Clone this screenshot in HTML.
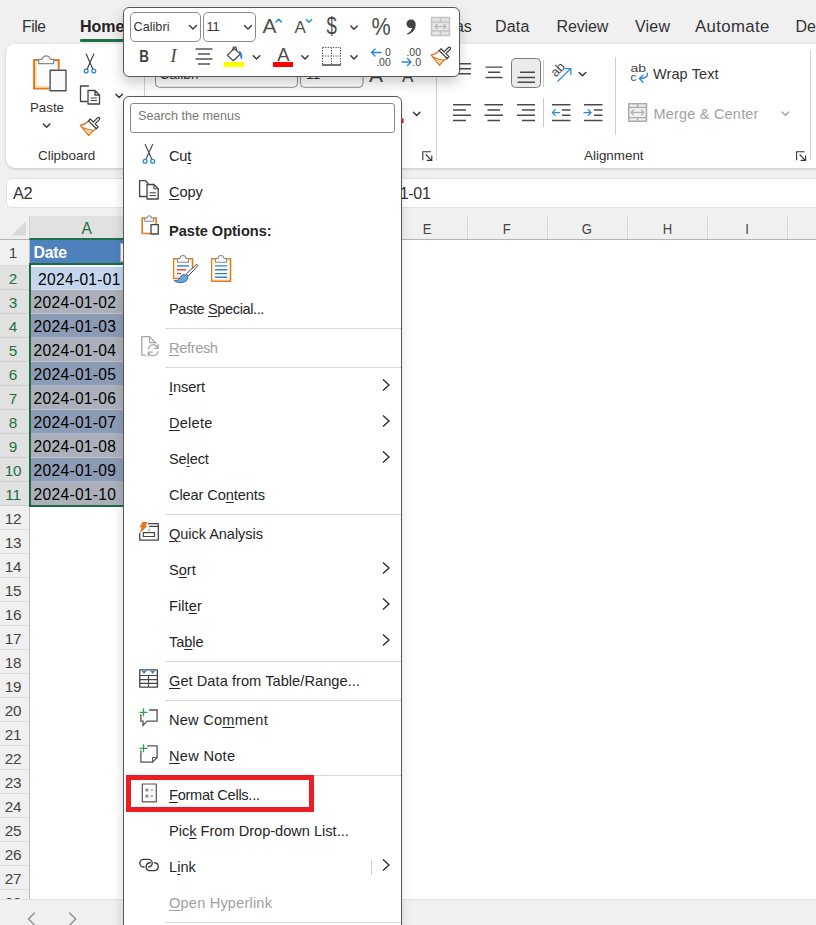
<!DOCTYPE html>
<html lang="en">
<head>
<meta charset="utf-8">
<title>Excel - Format Cells context menu</title>
<style>
*{box-sizing:border-box;margin:0;padding:0}
html,body{width:816px;height:925px;overflow:hidden;background:#f0f0f0;font-family:"Liberation Sans",sans-serif;color:#242424}
.abs{position:absolute}
#app{position:relative;width:816px;height:925px;overflow:hidden;background:#f0f0f0}
/* tabs */
.tab{position:absolute;top:16.700px;font-size:16.5px;line-height:20px;color:#333;white-space:nowrap}
/* ribbon */
#ribbon{position:absolute;left:6px;top:44px;width:830px;height:124px;background:#fff;border-radius:9px;box-shadow:0 1px 3px rgba(0,0,0,.18)}
.rl{position:absolute;font-size:13px;color:#333;white-space:nowrap}
/* formula bar */
#namebox{position:absolute;left:6px;top:178px;width:170px;height:30px;background:#fff;border:1px solid #e2e2e2;border-radius:6px}
#fbar{position:absolute;left:184px;top:178px;width:650px;height:30px;background:#fff;border:1px solid #e2e2e2;border-radius:6px}
/* grid */
#sheet{position:absolute;left:0;top:216px;width:816px;height:683px;background:#fff;overflow:hidden}
#colhdr{position:absolute;left:0;top:0;width:816px;height:24px;background:#f0f0f0;border-bottom:1px solid #b4b4b4}
.ch{position:absolute;top:1px;height:22px;font-size:15.200px;line-height:23px;text-align:center;color:#444;border-right:1px solid #d6d6d6}
.ch span{display:inline-block;transform:scaleX(.86)}
#rowhdr{position:absolute;left:0;top:24px;width:30px;height:660px;background:#f0f0f0;border-right:1px solid #bdbdbd}
.rh{position:absolute;left:0;width:29px;height:24px;font-size:15.300px;line-height:24px;text-align:center;color:#444;border-bottom:1px solid #dcdcdc;padding-right:3px;letter-spacing:-.2px}
.rh.s{color:#1e6e42;background:#e1e1e1;border-bottom-color:#cfcfcf}
.cell{position:absolute;left:31px;width:100px;height:24px;font-size:15.600px;letter-spacing:.3px;line-height:25px;color:#000;white-space:nowrap;padding-left:2px}
/* bottom */
#bottom{position:absolute;left:0;top:899px;width:816px;height:26px;background:#f0f0f0;border-top:1px solid #e0e0e0}
/* mini toolbar */
#mini{position:absolute;left:123px;top:7px;width:337px;height:70px;background:#fff;border:1px solid #585858;border-radius:6px;box-shadow:-1px 6px 13px rgba(0,0,0,.2)}
.combo{border:1px solid #8c8c8c;border-radius:5px;background:#fff}
.mt{line-height:20px;color:#333;white-space:nowrap}
/* menu */
#menu{position:absolute;left:123px;top:96px;width:279px;height:840px;background:#fff;border:1px solid #585858;border-radius:6px 6px 0 0;box-shadow:-1px 5px 12px rgba(0,0,0,.14)}
.mi{position:absolute;left:169px;font-size:14.6px;line-height:20px;color:#262626;white-space:nowrap}
.mi.d{color:#a0a0a0}
.mi u{text-decoration:underline;text-underline-offset:2px;text-decoration-thickness:1px}
.sep{position:absolute;left:165px;width:236px;height:1px;background:#d6d6d6}
.arr{position:absolute;left:380.500px;width:10px;height:14px}
</style>
</head>
<body>
<div id="app">

<!-- TABS -->
<div class="tab" style="left:22px;font-size:15.600px;letter-spacing:-.4px">File</div>
<div class="tab" style="left:80px;font-weight:bold;color:#222;font-size:16px">Home</div>
<div class="abs" style="left:80px;top:39px;width:46px;height:2.500px;background:#1e7145;border-radius:1px"></div>
<div class="tab" style="left:442.500px;font-size:16px">ulas</div>
<div class="tab" style="left:495px;font-size:16px;letter-spacing:.2px">Data</div>
<div class="tab" style="left:556.500px;font-size:16px;letter-spacing:-.15px">Review</div>
<div class="tab" style="left:635px;font-size:16px;letter-spacing:.18px">View</div>
<div class="tab" style="left:695px;font-size:16.800px;letter-spacing:.35px">Automate</div>
<div class="tab" style="left:795.500px;font-size:16px">Developer</div>

<!-- RIBBON -->
<!--RIB-START-->
<div id="ribbon"></div>
<div class="rl" style="left:30px;top:97.500px;font-size:13.300px;line-height:20px">Paste</div>
<div class="rl" style="left:38px;top:146px;font-size:13.400px;line-height:20px">Clipboard</div>
<div class="rl" style="left:584px;top:146px;font-size:13.400px;line-height:20px">Alignment</div>
<div class="rl" style="left:653px;top:63.800px;font-size:14.500px;line-height:20px;letter-spacing:.1px">Wrap Text</div>
<div class="rl" style="left:653.500px;top:103.500px;font-size:14.500px;line-height:20px;color:#a2a2a2;letter-spacing:.2px">Merge &amp; Center</div>
<div class="rl" style="left:159.500px;top:64.500px;font-size:13.800px;line-height:20px;color:#333">Calibri</div>
<div class="rl" style="left:306px;top:64.500px;font-size:13.800px;line-height:20px;color:#333">11</div>
<svg class="abs" style="left:0;top:44px" width="816" height="124" viewBox="0 44 816 124" fill="none" stroke-linecap="round" stroke-linejoin="round">
  <!-- group separators -->
  <path d="M144.500 50.500V160.500M436.500 50.500V160.500M615.500 57.500V134.500M810.500 50.500V160.500" stroke="#cfcfcf" stroke-width="1" stroke-linecap="butt"/>
  <path d="M543.500 60V87M543.500 98V127" stroke="#c8c8c8" stroke-width="1" stroke-linecap="butt"/>
  <!-- paste icon -->
  <path d="M58.700 69.500V60.100H34.100V88.400H49.500" stroke="#e8761b" stroke-width="2" fill="#fcfcfc" stroke-linejoin="miter" stroke-linecap="butt"/>
  <path d="M35.900 61.500V86.700H49.500" stroke="#fbd9a0" stroke-width="1.400" stroke-linejoin="miter" stroke-linecap="butt"/>
  <path d="M38.700 63.700V59.300H42a4.300 4.300 0 0 1 8.400 0H53.700V63.700Z" fill="#fafafa" stroke="#8a8a8a" stroke-width="1.200"/>
  <rect x="50.100" y="70.200" width="15.900" height="20.500" fill="#fafafa" stroke="#505050" stroke-width="1.400"/>
  <path d="M43.300 124L46.600 127.300L49.900 124" stroke="#333" stroke-width="1.400"/>
  <!-- scissors -->
  <path d="M86.200 54L93 69.500M93.800 54L87 69.500" stroke="#444" stroke-width="1.200"/>
  <circle cx="86.200" cy="71" r="1.900" stroke="#2b88d8" stroke-width="1.300"/>
  <circle cx="93.800" cy="71" r="1.900" stroke="#2b88d8" stroke-width="1.300"/>
  <!-- copy -->
  <path d="M87 101.500H80.500V86H88.500" stroke="#444" stroke-width="1.300"/>
  <path d="M88 90.500H95L99.500 95V104H88Z M95 90.500V95H99.500" stroke="#444" stroke-width="1.300" fill="#fff"/>
  <path d="M91 98H96.500M91 100.500H96.500" stroke="#444" stroke-width="1"/>
  <path d="M115.800 94.200L119.100 97.500L122.400 94.200" stroke="#333" stroke-width="1.400"/>
  <!-- format painter -->
  <g transform="translate(80 116.500)">
    <path d="M8.300 4.700C6 7 3.500 8.300 .400 8.800L8.700 18.900C10.200 16.500 12.500 14.300 15.900 12.500" stroke="#e36c0a" stroke-width="1.300" fill="#fdfdfd"/>
    <path d="M2.600 11C6 12.700 9.500 13.700 13.600 14" stroke="#e36c0a" stroke-width="1.100"/>
    <path d="M5.900 13.700L11.800 14.500L8.700 17.800Z" fill="#fbd58f" stroke="none"/>
    <path d="M8.420 4.310L10.260 2.470L13.340 5.550L17.720 1.170A1.250 1.250 0 0 1 19.480 2.930L15.100 7.310L18.180 10.390L16.340 12.230Z" stroke="#3a3a3a" stroke-width="1.200" fill="#fff"/>
  </g>
  <!-- font combos (mostly hidden) -->
  <rect x="155.500" y="59.500" width="142" height="27.800" rx="4" stroke="#8c8c8c" fill="none"/>
  <rect x="300.500" y="59.500" width="62.500" height="27.800" rx="4" stroke="#8c8c8c" fill="none"/>
  <text x="369" y="82" font-family="Liberation Sans, sans-serif" font-size="21" fill="#444" stroke="none">A</text>
  <text x="402" y="82" font-family="Liberation Sans, sans-serif" font-size="17" fill="#444" stroke="none">A</text>
  <!-- bits right of menu -->
  <rect x="401" y="118.500" width="2.500" height="4.500" fill="#ff0000" stroke="none"/>
  <path d="M413.400 112.200L416.700 115.500L420 112.200" stroke="#333" stroke-width="1.400"/>
  <path d="M422.800 160.300V151.800H430.800M425.800 154.500L431.600 160.300M431.800 155.500V160.400H426.800" stroke="#333" stroke-width="1.100" stroke-linecap="butt" stroke-linejoin="miter"/>
  <path d="M796.600 160.300V151.800H804.600M799.600 154.500L805.400 160.300M805.600 155.500V160.400H800.600" stroke="#333" stroke-width="1.100" stroke-linecap="butt" stroke-linejoin="miter"/>
  <!-- vertical align icons -->
  <path d="M453 63.700H471M453 68.700H471M453 73.700H471" stroke="#4a4a4a" stroke-width="1.400" stroke-linecap="butt"/>
  <path d="M485.500 67.100H502.500M488 72.300H500.300M485.500 77.500H502.500" stroke="#4a4a4a" stroke-width="1.400" stroke-linecap="butt"/>
  <rect x="511.500" y="58.500" width="29" height="29" rx="4" fill="#ebebeb" stroke="#7a7a7a"/>
  <path d="M520 72.300H535M517.500 77.500H535M517.500 82.200H535" stroke="#4a4a4a" stroke-width="1.400" stroke-linecap="butt"/>
  <!-- orientation -->
  <text transform="translate(555.800 77.500) rotate(-45)" font-family="Liberation Sans, sans-serif" font-size="12.800" fill="#444" stroke="none">ab</text>
  <path d="M557.800 81.200L570.600 68.600M565 68.500H570.800V74.500" stroke="#2b88d8" stroke-width="1.250"/>
  <path d="M579.200 72.500L582.500 75.800L585.800 72.500" stroke="#333" stroke-width="1.400"/>
  <!-- horizontal align -->
  <path d="M453 104.800H471M453 110H466M453 115.300H471M453 120.500H466" stroke="#4a4a4a" stroke-width="1.400" stroke-linecap="butt"/>
  <path d="M484.500 104.800H503M487.500 110H500M484.500 115.300H503M487.500 120.500H500" stroke="#4a4a4a" stroke-width="1.400" stroke-linecap="butt"/>
  <path d="M517 104.800H535M522 110H535M517 115.300H535M522 120.500H535" stroke="#4a4a4a" stroke-width="1.400" stroke-linecap="butt"/>
  <!-- indents -->
  <path d="M552 104.800H570.500M562 110H570.500M562 115.300H570.500M552 120.500H570.500" stroke="#4a4a4a" stroke-width="1.400" stroke-linecap="butt"/>
  <path d="M552.500 112.600H559.500M555.200 109.800L552.400 112.600L555.200 115.400" stroke="#2b88d8" stroke-width="1.300"/>
  <path d="M584 104.800H602.500M594 110H602.500M594 115.300H602.500M584 120.500H602.500" stroke="#4a4a4a" stroke-width="1.400" stroke-linecap="butt"/>
  <path d="M584 112.600H591M588.300 109.800L591.100 112.600L588.300 115.400" stroke="#2b88d8" stroke-width="1.300"/>
  <!-- wrap text icon -->
  <text x="630.500" y="71.500" font-family="Liberation Sans, sans-serif" font-size="11.600" fill="#444" stroke="none" textLength="15.500" lengthAdjust="spacingAndGlyphs">ab</text>
  <text x="630.500" y="81.300" font-family="Liberation Sans, sans-serif" font-size="11.600" fill="#444" stroke="none">c</text>
  <path d="M647.500 73.200c.3 3.300-2.500 5.300-7.800 5.300M643 75.200L639.400 78.600L643 82.200" stroke="#2b88d8" stroke-width="1.400"/>
  <!-- merge icon (disabled) -->
  <rect x="628.700" y="103.700" width="17.800" height="17.500" fill="#efefef" stroke="#ababab" stroke-width="1.500"/>
  <path d="M628.700 107.300H646.500M628.700 117.600H646.500M637.600 103.700V107.300M637.600 117.600V121.200" stroke="#ababab" stroke-width="1.200" stroke-linecap="butt"/>
  <path d="M631.200 112.400H643.800M633.500 110L631.100 112.400L633.500 114.800M641.500 110L643.900 112.400L641.500 114.800" stroke="#b0b0b0" stroke-width="1.100"/>
  <path d="M782 112L785.400 115.400L788.800 112" stroke="#9a9a9a" stroke-width="1.300"/>
</svg>
<!--RIB-END-->

<!-- FORMULA BAR -->
<div id="namebox"><div class="abs" style="left:6px;top:4px;font-size:16.400px;letter-spacing:-.5px;line-height:20px;color:#333">A2</div></div>
<div id="fbar"><div class="abs" style="right:402.500px;top:4.500px;font-size:16px;letter-spacing:-.3px;line-height:20px;color:#333;white-space:nowrap">2024-01-01</div></div>

<!-- SHEET -->
<div id="sheet">
  <div id="colhdr"></div>
  <svg class="abs" style="left:10.500px;top:5px" width="15.500" height="14.500" viewBox="0 0 16 15"><path d="M16 0V15H0Z" fill="#d9d9d9"/></svg>
  <div class="ch" style="left:29px;width:118px;background:#e1e1e1;color:#1e6e42;border-bottom:2px solid #1e7145;top:0;height:24px;line-height:26px;text-align:left;padding-left:51.500px;border-left:1px solid #cfcfcf;font-size:15.600px"><span style="transform:none">A</span></div>
  <div class="ch" style="left:387px;width:81px"><span>E</span></div>
  <div class="ch" style="left:467px;width:81px"><span>F</span></div>
  <div class="ch" style="left:547px;width:81px"><span>G</span></div>
  <div class="ch" style="left:627px;width:81px"><span>H</span></div>
  <div class="ch" style="left:707px;width:81px"><span>I</span></div>
  <div class="ch" style="left:787px;width:81px"><span>J</span></div>
  <div id="rowhdr"></div>
  <div class="rh" style="top:24px;height:25.5px;line-height:26.5px">1</div>
  <div class="rh s" style="top:49.5px;height:24px;line-height:25px">2</div>
  <div class="rh s" style="top:73.5px;height:24px;line-height:25px">3</div>
  <div class="rh s" style="top:97.5px;height:24px;line-height:25px">4</div>
  <div class="rh s" style="top:121.5px;height:24px;line-height:25px">5</div>
  <div class="rh s" style="top:145.5px;height:24px;line-height:25px">6</div>
  <div class="rh s" style="top:169.5px;height:24px;line-height:25px">7</div>
  <div class="rh s" style="top:193.5px;height:24px;line-height:25px">8</div>
  <div class="rh s" style="top:217.5px;height:24px;line-height:25px">9</div>
  <div class="rh s" style="top:241.5px;height:24px;line-height:25px">10</div>
  <div class="rh s" style="top:265.5px;height:24px;line-height:25px">11</div>
  <div class="rh" style="top:289.5px;height:24px;line-height:25px">12</div>
  <div class="rh" style="top:313.5px;height:24px;line-height:25px">13</div>
  <div class="rh" style="top:337.5px;height:24px;line-height:25px">14</div>
  <div class="rh" style="top:361.5px;height:24px;line-height:25px">15</div>
  <div class="rh" style="top:385.5px;height:24px;line-height:25px">16</div>
  <div class="rh" style="top:409.5px;height:24px;line-height:25px">17</div>
  <div class="rh" style="top:433.5px;height:24px;line-height:25px">18</div>
  <div class="rh" style="top:457.5px;height:24px;line-height:25px">19</div>
  <div class="rh" style="top:481.5px;height:24px;line-height:25px">20</div>
  <div class="rh" style="top:505.5px;height:24px;line-height:25px">21</div>
  <div class="rh" style="top:529.5px;height:24px;line-height:25px">22</div>
  <div class="rh" style="top:553.5px;height:24px;line-height:25px">23</div>
  <div class="rh" style="top:577.5px;height:24px;line-height:25px">24</div>
  <div class="rh" style="top:601.5px;height:24px;line-height:25px">25</div>
  <div class="rh" style="top:625.5px;height:24px;line-height:25px">26</div>
  <div class="rh" style="top:649.5px;height:24px;line-height:25px">27</div>
  <div class="rh" style="top:673.5px;height:24px;line-height:25px">28</div>
  <div class="cell" style="top:24px;height:24px;background:#4f81bd;color:#fff;font-weight:bold;left:30px;padding-left:3.500px;font-size:15.800px;letter-spacing:-.25px;line-height:25px">Date</div>
  <div class="abs" style="left:120px;top:27px;width:10px;height:19px;background:#fff;border:1px solid #b0b0b0"></div>
  <div class="cell" style="top:49.5px;background:#c5d7ee;padding-left:7px;border-bottom:1px solid rgba(255,255,255,.25);border-top:1px solid #fff">2024-01-01</div>
  <div class="cell" style="top:73.5px;background:#abb0ba;padding-left:2.5px;border-bottom:1px solid rgba(255,255,255,.25)">2024-01-02</div>
  <div class="cell" style="top:97.5px;background:#8d9cb6;padding-left:2.5px;border-bottom:1px solid rgba(255,255,255,.25)">2024-01-03</div>
  <div class="cell" style="top:121.5px;background:#abb0ba;padding-left:2.5px;border-bottom:1px solid rgba(255,255,255,.25)">2024-01-04</div>
  <div class="cell" style="top:145.5px;background:#8d9cb6;padding-left:2.5px;border-bottom:1px solid rgba(255,255,255,.25)">2024-01-05</div>
  <div class="cell" style="top:169.5px;background:#abb0ba;padding-left:2.5px;border-bottom:1px solid rgba(255,255,255,.25)">2024-01-06</div>
  <div class="cell" style="top:193.5px;background:#8d9cb6;padding-left:2.5px;border-bottom:1px solid rgba(255,255,255,.25)">2024-01-07</div>
  <div class="cell" style="top:217.5px;background:#abb0ba;padding-left:2.5px;border-bottom:1px solid rgba(255,255,255,.25)">2024-01-08</div>
  <div class="cell" style="top:241.5px;background:#8d9cb6;padding-left:2.5px;border-bottom:1px solid rgba(255,255,255,.25)">2024-01-09</div>
  <div class="cell" style="top:265.5px;background:#abb0ba;padding-left:2.5px;border-bottom:1px solid rgba(255,255,255,.25)">2024-01-10</div>
  <div class="abs" style="left:28.600px;top:47px;width:120px;height:243.800px;border:2px solid #1c6b3f"></div>
</div>

<div id="bottom"><svg class="abs" style="left:24px;top:10px" width="60" height="16" viewBox="24 909 60 16" fill="none" stroke="#8c8c8c" stroke-width="1.300" stroke-linecap="round" stroke-linejoin="round"><path d="M34.500 912L28.500 918L34.500 924M69.700 912L75.700 918L69.700 924"/></svg></div>

<!-- MINI TOOLBAR -->
<!--MINI-START-->
<div id="mini"></div>
<div class="abs combo" style="left:130px;top:12px;width:71px;height:30px"></div>
<div class="abs combo" style="left:203px;top:12px;width:53px;height:30px"></div>
<div class="abs mt" style="left:133.500px;top:17px;font-size:12.700px">Calibri</div>
<div class="abs mt" style="left:206.500px;top:17px;font-size:12.700px">11</div>
<svg class="abs" style="left:124px;top:8px" width="336" height="68" viewBox="124 8 336 68" fill="none" stroke-linecap="round" stroke-linejoin="round">
  <!-- combo chevrons -->
  <path d="M189.5 25.5L193 29L196.500 25.500" stroke="#333" stroke-width="1.4"/>
  <path d="M244.5 25.5L248 29L251.500 25.500" stroke="#333" stroke-width="1.4"/>
  <!-- grow / shrink font -->
  <text x="262.500" y="33" font-family="Liberation Sans, sans-serif" font-size="21" fill="#505050" stroke="none">A</text>
  <path d="M276 22L278.700 19.300L281.400 22" stroke="#2b88d8" stroke-width="1.5"/>
  <text x="294.500" y="33" font-family="Liberation Sans, sans-serif" font-size="17" fill="#505050" stroke="none">A</text>
  <path d="M306.300 19.500L309 22.200L311.700 19.500" stroke="#2b88d8" stroke-width="1.5"/>
  <!-- $ -->
  <text transform="translate(331.600 34.200) scale(.76 1)" text-anchor="middle" font-family="Liberation Sans, sans-serif" font-size="24.500" fill="#4a4a4a" stroke="none">$</text>
  <path d="M350.800 26L354 29.200L357.200 26" stroke="#333" stroke-width="1.4"/>
  <!-- % -->
  <text transform="translate(381 35.300) scale(.9 1)" text-anchor="middle" font-family="Liberation Sans, sans-serif" font-size="24" fill="#4a4a4a" stroke="none">%</text>
  <!-- comma -->
  <path d="M411 19.500a4.300 4.300 0 1 0 1.300 8.300c-.6 2.600-2.300 4.700-5.300 5.800l.5 1c5.500-1.700 8.200-5.700 8.200-10.200c0-3-1.900-4.900-4.700-4.900z" fill="#444" stroke="none"/>
  <!-- merge (disabled) -->
  <rect x="431.500" y="17.500" width="18" height="18" fill="#e4e4e4" stroke="#c4c4c4" stroke-width="1.500"/>
  <path d="M431.500 22H449.500M431.500 31H449.500M440.500 17.500V22M440.500 31V35.500" stroke="#c4c4c4" stroke-width="1.300"/>
  <path d="M435 26.500H446M437 24.500L435 26.500L437 28.500M444 24.500L446 26.500L444 28.500" stroke="#b4b4b4" stroke-width="1.200"/>
  <!-- Bold / Italic -->
  <text transform="translate(139.300 61.500) scale(.8 1)" font-family="Liberation Sans, sans-serif" font-weight="bold" font-size="16.800" fill="#444" stroke="none">B</text>
  <text x="170.500" y="62" font-family="Liberation Serif, serif" font-style="italic" font-size="18" fill="#444" stroke="none">I</text>
  <!-- center align -->
  <path d="M195.500 49H212.500M198 54H210M195.500 59H212.500M198 64H210" stroke="#555" stroke-width="1.300" stroke-linecap="butt"/>
  <!-- fill bucket -->
  <rect x="223.700" y="62" width="20.500" height="5" fill="#ffff00" stroke="none"/>
  <path d="M234 48.400L227.400 55.400L233.300 60.700L240.300 54Z" stroke="#444" stroke-width="1.200" fill="#fff"/>
  <path d="M233 50.500V48.500a1.700 1.700 0 0 1 3.400 0V50.500" stroke="#444" stroke-width="1.200"/>
  <path d="M239 51.300c1.700.3 2.900 1.600 2.900 3.600v4.300c-1.100-.8-1.600-2.300-1.600-4.100z" fill="#2b7cd3" stroke="#2b7cd3" stroke-width=".5"/>
  <path d="M253.300 55.800L256.500 59L259.700 55.800" stroke="#333" stroke-width="1.400"/>
  <!-- font colour -->
  <text x="283.300" y="60.700" text-anchor="middle" font-family="Liberation Sans, sans-serif" font-size="18.400" fill="#4a4a4a" stroke="none">A</text>
  <rect x="273" y="62" width="20" height="5" fill="#ff0000" stroke="none"/>
  <path d="M301.800 55.800L305 59L308.200 55.800" stroke="#333" stroke-width="1.400"/>
  <!-- borders -->
  <path d="M322.500 47.500H340.500M322.500 47.500V64M340.500 47.500V64M331.500 47.500V64M322.500 56H340.500" stroke="#555" stroke-width="1.100" stroke-dasharray="1.300 1.300" stroke-linecap="butt"/>
  <path d="M322 65H341" stroke="#444" stroke-width="1.500" stroke-linecap="butt"/>
  <path d="M350.800 55.800L354 59L357.200 55.800" stroke="#333" stroke-width="1.400"/>
  <!-- increase decimal -->
  <path d="M371.500 52.500H381M375 49L371.500 52.500L375 56" stroke="#2b88d8" stroke-width="1.400"/>
  <text x="390.800" y="56" text-anchor="end" font-family="Liberation Sans, sans-serif" font-size="10.500" fill="#444" stroke="none">0</text>
  <text x="390.800" y="66" text-anchor="end" font-family="Liberation Sans, sans-serif" font-size="10.500" fill="#444" stroke="none">.00</text>
  <!-- decrease decimal -->
  <text x="421" y="56" text-anchor="end" font-family="Liberation Sans, sans-serif" font-size="10.500" fill="#444" stroke="none">.00</text>
  <text x="421" y="66" text-anchor="end" font-family="Liberation Sans, sans-serif" font-size="10.500" fill="#444" stroke="none">.0</text>
  <path d="M402 62H411M407.500 58.500L411 62L407.500 65.500" stroke="#2b88d8" stroke-width="1.400"/>
  <!-- format painter -->
  <g transform="translate(430.800 46.300)">
    <path d="M8.300 4.700C6 7 3.500 8.300 .400 8.800L8.700 18.900C10.200 16.500 12.500 14.300 15.900 12.500" stroke="#e36c0a" stroke-width="1.300" fill="#fdfdfd"/>
    <path d="M2.600 11C6 12.700 9.500 13.700 13.600 14" stroke="#e36c0a" stroke-width="1.100"/>
    <path d="M5.900 13.700L11.800 14.500L8.700 17.800Z" fill="#fbd58f" stroke="none"/>
    <path d="M8.420 4.310L10.260 2.470L13.340 5.550L17.720 1.170A1.250 1.250 0 0 1 19.480 2.930L15.100 7.310L18.180 10.390L16.340 12.230Z" stroke="#3a3a3a" stroke-width="1.200" fill="#fff"/>
  </g>
</svg>
<!--MINI-END-->

<!-- CONTEXT MENU -->
<!--MENU-START-->
<div id="menu"></div>
<div class="abs" style="left:130px;top:103px;width:265px;height:30px;border:1px solid #8a8a8a;border-radius:3px;background:#fff"></div>
<div class="abs" style="left:138px;top:106px;font-size:12.6px;line-height:20px;color:#787878;white-space:nowrap">Search the menus</div>
<div class="mi" style="top:146.0px;letter-spacing:-0.21px">Cu<u>t</u></div>
<div class="mi" style="top:182.0px;letter-spacing:-0.1px"><u>C</u>opy</div>
<div class="mi" style="top:220.5px;letter-spacing:-0.03px"><b>Paste Options:</b></div>
<div class="mi" style="top:299.0px;letter-spacing:-0.4px">Paste <u>S</u>pecial...</div>
<div class="mi d" style="top:338.0px;letter-spacing:-0.36px"><u>R</u>efresh</div>
<div class="mi" style="top:377.0px;letter-spacing:-0.09px"><u>I</u>nsert</div>
<svg class="arr" style="top:378.0px" viewBox="0 0 10 14"><path d="M2 1.5L8 7L2 12.5" fill="none" stroke="#262626" stroke-width="1.3"/></svg>
<div class="mi" style="top:413.0px;letter-spacing:0.22px"><u>D</u>elete</div>
<svg class="arr" style="top:414.0px" viewBox="0 0 10 14"><path d="M2 1.5L8 7L2 12.5" fill="none" stroke="#262626" stroke-width="1.3"/></svg>
<div class="mi" style="top:449.0px;letter-spacing:-0.13px">Se<u>l</u>ect</div>
<svg class="arr" style="top:450.0px" viewBox="0 0 10 14"><path d="M2 1.5L8 7L2 12.5" fill="none" stroke="#262626" stroke-width="1.3"/></svg>
<div class="mi" style="top:485.0px;letter-spacing:-0.1px">Clear Co<u>n</u>tents</div>
<div class="mi" style="top:524.0px;letter-spacing:-0.07px"><u>Q</u>uick Analysis</div>
<div class="mi" style="top:560.0px">S<u>o</u>rt</div>
<svg class="arr" style="top:561.0px" viewBox="0 0 10 14"><path d="M2 1.5L8 7L2 12.5" fill="none" stroke="#262626" stroke-width="1.3"/></svg>
<div class="mi" style="top:596.0px;letter-spacing:0.06px">Filt<u>e</u>r</div>
<svg class="arr" style="top:597.0px" viewBox="0 0 10 14"><path d="M2 1.5L8 7L2 12.5" fill="none" stroke="#262626" stroke-width="1.3"/></svg>
<div class="mi" style="top:632.0px;letter-spacing:-0.06px">Ta<u>b</u>le</div>
<svg class="arr" style="top:633.0px" viewBox="0 0 10 14"><path d="M2 1.5L8 7L2 12.5" fill="none" stroke="#262626" stroke-width="1.3"/></svg>
<div class="mi" style="top:671.0px;letter-spacing:0.05px"><u>G</u>et Data from Table/Range...</div>
<div class="mi" style="top:710.0px;letter-spacing:0.22px">New Co<u>m</u>ment</div>
<div class="mi" style="top:746.0px;letter-spacing:0.28px"><u>N</u>ew Note</div>
<div class="mi" style="top:785.0px;letter-spacing:-0.28px"><u>F</u>ormat Cells...</div>
<div class="mi" style="top:821.0px;letter-spacing:-0.01px">Pic<u>k</u> From Drop-down List...</div>
<div class="mi" style="top:857.0px">L<u>i</u>nk</div>
<svg class="arr" style="top:858.0px" viewBox="0 0 10 14"><path d="M2 1.5L8 7L2 12.5" fill="none" stroke="#262626" stroke-width="1.3"/></svg>
<div class="mi d" style="top:893.0px;letter-spacing:0.18px"><u>O</u>pen Hyperlink</div>
<div class="sep" style="top:327.5px"></div>
<div class="sep" style="top:366.5px"></div>
<div class="sep" style="top:513.5px"></div>
<div class="sep" style="top:660.5px"></div>
<div class="sep" style="top:699.5px"></div>
<div class="sep" style="top:774.5px"></div>
<div class="sep" style="top:921.5px"></div>
<div class="abs" style="left:371px;top:860px;width:1px;height:15px;background:#d0d0d0"></div>
<div class="abs" style="left:126px;top:775px;width:188px;height:37px;border:5px solid #ed1c24"></div>
<!--MICON-START-->
<svg class="abs" style="left:124px;top:137px" width="120" height="788" viewBox="124 137 120 788" fill="none" stroke-linecap="round" stroke-linejoin="round">
  <!-- cut -->
  <path d="M145.200 144.500L151.800 159.300M152.600 144.500L146 159.300" stroke="#444" stroke-width="1.100"/>
  <circle cx="145.100" cy="161.300" r="1.900" stroke="#2b88d8" stroke-width="1.300"/>
  <circle cx="152.700" cy="161.300" r="1.900" stroke="#2b88d8" stroke-width="1.300"/>
  <!-- copy -->
  <path d="M146 196.500H139.600V180.700H145.500L148 183.200" stroke="#444" stroke-width="1.300"/>
  <path d="M147 184.500H154L158.200 188.700V199H147Z" stroke="#444" stroke-width="1.300" fill="#fafafa"/>
  <path d="M154 184.500V188.700H158.200" stroke="#444" stroke-width="1.100"/>
  <path d="M150 192.800H155.500M150 195.600H155.500" stroke="#444" stroke-width="1"/>
  <!-- paste small -->
  <path d="M144.500 218H142.200V233.500H150" stroke="#e8761b" stroke-width="1.600"/>
  <path d="M154 218H156.200V223.500" stroke="#e8761b" stroke-width="1.600"/>
  <path d="M144.800 221.300V218H147a2.200 2.200 0 0 1 4.400 0H153.600V221.300Z" stroke="#8a8a8a" stroke-width="1.100" fill="#fafafa"/>
  <rect x="151" y="224.700" width="7.300" height="9.300" stroke="#444" stroke-width="1.300" fill="#fafafa"/>
  <!-- paste option 1: keep source formatting -->
  <rect x="173.800" y="258.800" width="18.700" height="19.600" fill="#fffdf6" stroke="#e8761b" stroke-width="1.600"/>
  <rect x="175" y="260" width="16.300" height="17.200" fill="none" stroke="#fbe3b5" stroke-width="1"/>
  <path d="M177.500 262.300V258.500H180a3 3 0 0 1 6 0H188.500V262.300Z" fill="#fafafa" stroke="#8a8a8a" stroke-width="1.100"/>
  <path d="M177 265.900H189" stroke="#2b88d8" stroke-width="1.400" stroke-linecap="butt"/>
  <path d="M177 269.800H186" stroke="#e8394b" stroke-width="1.400" stroke-linecap="butt"/>
  <path d="M177 273.600H181" stroke="#e8394b" stroke-width="1.400" stroke-linecap="butt"/>
  <path d="M183 279.800L198.500 262.500V284H172V279.800Z" fill="#fff" stroke="none"/>
  <path d="M196.400 264.600a1 1 0 0 1 1.300 1.300L188.300 276L186.500 274.300Z" stroke="#444" stroke-width="1" fill="#fff"/>
  <path d="M174.500 280.800c2.800.3 4.600-.8 5.600-3.200c.9-2.200 3-3.300 5.300-2.900l2.300 2.300c.3 2.400-1.400 4.500-4.300 5.300c-3.200.8-6.800.2-8.900-1.500z" fill="#6aa5dd" stroke="#2467b4" stroke-width=".9"/>
  <!-- paste option 2: values -->
  <rect x="211.800" y="258.800" width="18.700" height="22.300" fill="#fffdf6" stroke="#e8761b" stroke-width="1.600"/>
  <rect x="213" y="260" width="16.300" height="19.900" fill="none" stroke="#fbe3b5" stroke-width="1"/>
  <path d="M215.500 262.300V258.500H218a3 3 0 0 1 6 0H226.500V262.300Z" fill="#fafafa" stroke="#8a8a8a" stroke-width="1.100"/>
  <path d="M215 265.900H227.300M215 269.800H227.300M215 273.600H227.300M215 277.300H227.300" stroke="#2b88d8" stroke-width="1.400" stroke-linecap="butt"/>
  <!-- refresh (disabled) -->
  <path d="M145.500 355.200H141.800V336.600H149.400L155.800 343" stroke="#a6a6a6" stroke-width="1.300" fill="none"/>
  <path d="M149.400 336.600V342.600H155.800" stroke="#a6a6a6" stroke-width="1.100"/>
  <path d="M148.500 349a4.900 4.900 0 0 1 9.300-1.200M158.200 344.500V348.400H154.300" stroke="#a6a6a6" stroke-width="1.200"/>
  <path d="M158 351.700a4.900 4.900 0 0 1-9.300 1.200M148.300 356V352.200H152.200" stroke="#a6a6a6" stroke-width="1.200"/>
  <!-- quick analysis -->
  <path d="M148.500 523.700H158.300V540.200H139.700V533.500" stroke="#444" stroke-width="1.300"/>
  <path d="M149.500 526.400H158.300" stroke="#444" stroke-width="1.100"/>
  <rect x="143.300" y="532.700" width="11.200" height="3.800" stroke="#444" stroke-width="1.200"/>
  <path d="M149 528.700V532.500" stroke="#9a9a9a" stroke-width="1"/>
  <path d="M142.400 522H147.600L145.500 526.200H147.200L139.600 533.500L141.700 527.500H139.600Z" fill="#e8761b" stroke="none"/>
  <!-- table -->
  <rect x="139.800" y="669.900" width="17.600" height="17.300" stroke="#444" stroke-width="1.300" fill="#fff"/>
  <path d="M139.800 675.500H157.400M139.800 679.600H157.400M139.800 683.400H157.400M148.500 675.500V687.200" stroke="#444" stroke-width="1.100" stroke-linecap="butt"/>
  <path d="M141.600 671.100H146.600L144.100 673.900ZM150.200 671.100H155.200L152.700 673.900Z" fill="#2b88d8" stroke="none"/>
  <!-- new comment -->
  <path d="M149.500 710H157.100V721.100H147.200L143 725.400V721.100H140.900V714.600" stroke="#555" stroke-width="1.300" stroke-linejoin="miter"/>
  <path d="M139.500 712.300H147.500M143.500 708.300V716.300" stroke="#2ea14f" stroke-width="1.300" stroke-linecap="butt"/>
  <!-- new note -->
  <path d="M147.500 745.900H157.100V757.500L152.600 762.100H140.900V751" stroke="#555" stroke-width="1.300" stroke-linejoin="miter"/>
  <path d="M157.100 757.500H152.600V762.100" stroke="#555" stroke-width="1.100"/>
  <path d="M139.500 748.300H147.500M143.500 744.300V752.300" stroke="#2ea14f" stroke-width="1.300" stroke-linecap="butt"/>
  <!-- format cells -->
  <rect x="142.300" y="784" width="14" height="17.800" stroke="#555" stroke-width="1.200" fill="#fafafa"/>
  <rect x="145.500" y="788.600" width="2.800" height="2.800" fill="#8a8a8a" stroke="none"/>
  <rect x="145.500" y="794.700" width="2.800" height="2.800" fill="#8a8a8a" stroke="none"/>
  <path d="M150.400 790H153M150.400 796.100H153" stroke="#8a8a8a" stroke-width="1.100" stroke-linecap="butt"/>
  <!-- link -->
  <path d="M144 867a3.800 3.800 0 0 1-.7-7.600H148.300a3.800 3.800 0 0 1 .3 7.600" stroke="#3c3c3c" stroke-width="1.400"/>
  <path d="M150.200 862.750a3.950 3.950 0 0 0-.7 7.850H154.800a3.950 3.950 0 0 0-.2-7.850" stroke="#3c3c3c" stroke-width="1.400"/>
</svg>
<!--MICON-END-->
<!--MENU-END-->

</div>
</body>
</html>
